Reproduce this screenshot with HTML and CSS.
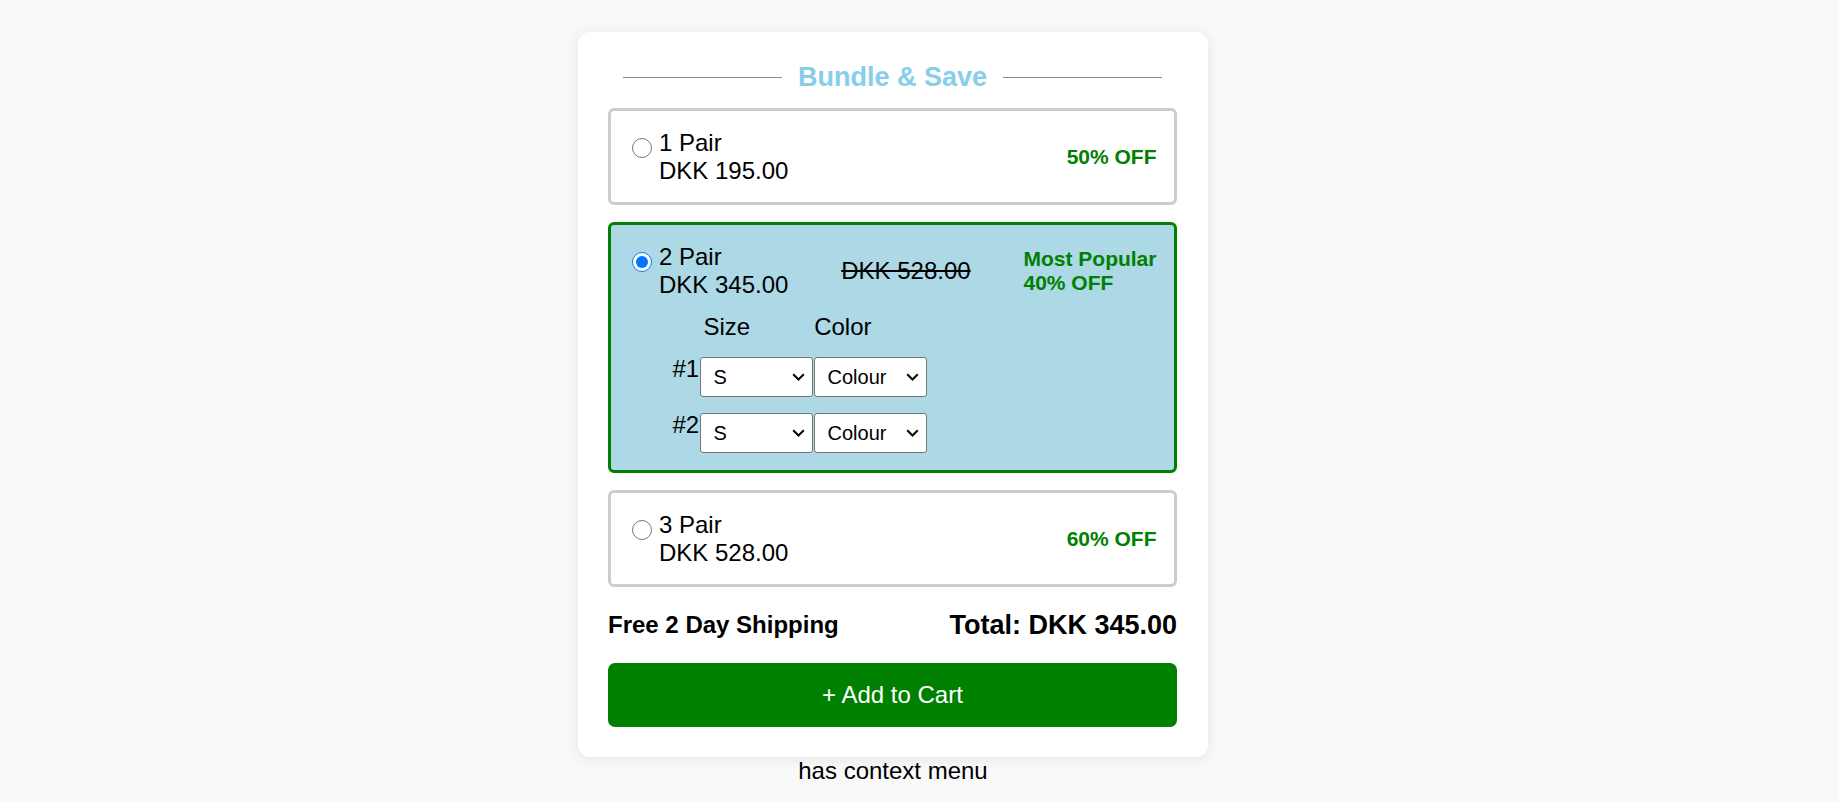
FILE: index.html
```html
<!DOCTYPE html>
<html lang="en">
<head>
<meta charset="utf-8">
<title>Bundle &amp; Save</title>
<link rel="stylesheet" href="styles.css">
</head>
<body>
<div class="page">
  <div class="card">
    <div class="title">
      <span class="title-line"></span>
      <span class="title-text">Bundle &amp; Save</span>
      <span class="title-line"></span>
    </div>

    <div class="option">
      <div class="option-head">
        <label class="choice">
          <input class="radio" type="radio" name="bundle">
          <span class="choice-text"><span>1 Pair</span><span>DKK 195.00</span></span>
        </label>
        <div class="badge">50% OFF</div>
      </div>
    </div>

    <div class="option option-selected">
      <div class="option-head">
        <label class="choice">
          <input class="radio" type="radio" name="bundle" checked>
          <span class="choice-text"><span>2 Pair</span><span>DKK 345.00</span></span>
        </label>
        <div class="old-price">DKK 528.00</div>
        <div class="badge"><span>Most Popular</span><span>40% OFF</span></div>
      </div>
      <div class="variants">
        <div class="variant-head">
          <span class="head-size">Size</span>
          <span class="head-color">Color</span>
        </div>
        <div class="variant-row">
          <span class="variant-num">#1</span>
          <select class="select"><option>S</option><option>M</option><option>L</option></select>
          <select class="select"><option>Colour</option></select>
        </div>
        <div class="variant-row">
          <span class="variant-num">#2</span>
          <select class="select"><option>S</option><option>M</option><option>L</option></select>
          <select class="select"><option>Colour</option></select>
        </div>
      </div>
    </div>

    <div class="option">
      <div class="option-head">
        <label class="choice">
          <input class="radio" type="radio" name="bundle">
          <span class="choice-text"><span>3 Pair</span><span>DKK 528.00</span></span>
        </label>
        <div class="badge">60% OFF</div>
      </div>
    </div>

    <div class="summary">
      <span class="shipping">Free 2 Day Shipping</span>
      <span class="total">Total: DKK 345.00</span>
    </div>

    <button class="cart-btn" type="button">+ Add to Cart</button>
  </div>
  <div class="note">has context menu</div>
</div>
</body>
</html>
```

FILE: styles.css
```css
* {
  box-sizing: border-box;
}

html, body {
  margin: 0;
  padding: 0;
  background: #f9f9f9;
}

body {
  font-family: "Liberation Sans", Arial, sans-serif;
  font-size: 24px;
  line-height: 28px;
  color: #000;
}

.page {
  width: 1786px;
  padding-top: 32px;
  display: flex;
  flex-direction: column;
  align-items: center;
}

.card {
  width: 630px;
  background: #fff;
  border-radius: 12px;
  padding: 30px 31px 30px 30px;
  box-shadow: 0 2px 14px rgba(0, 0, 0, 0.09);
  display: flex;
  flex-direction: column;
}

.title {
  display: flex;
  align-items: center;
  padding: 0 15px;
  margin-bottom: 15px;
}

.title-line {
  flex: 1;
  height: 1px;
  background: #8c8c8c;
}

.title-text {
  margin: 0 16px;
  font-size: 27px;
  line-height: 31px;
  font-weight: bold;
  color: #87ceeb;
}

.option {
  border: 3px solid #cccccc;
  border-radius: 6px;
  padding: 17.5px;
  margin-bottom: 17px;
  background: #fff;
}

.option-selected {
  border-color: #008000;
  background: #add8e6;
}

.option-head {
  display: flex;
  align-items: center;
  justify-content: space-between;
}

.choice {
  display: flex;
  align-items: flex-start;
}

.radio {
  width: 20px;
  height: 20px;
  margin: 9px 7px 0 3.5px;
  flex: none;
}

.choice-text {
  display: flex;
  flex-direction: column;
}

.old-price {
  text-decoration: line-through;
}

.badge {
  display: flex;
  flex-direction: column;
  font-size: 21px;
  line-height: 24px;
  font-weight: bold;
  color: #008000;
}

.variants {
  margin-left: 44px;
  margin-top: 14.5px;
}

.variant-head {
  display: flex;
  margin-bottom: 15.7px;
}

.head-size {
  margin-left: 31px;
}

.head-color {
  margin-left: 64px;
}

.variant-row {
  display: flex;
  align-items: flex-start;
  gap: 1px;
  margin-bottom: 16px;
}

.variant-row:last-child {
  margin-bottom: 0;
}

.variant-num {
  width: 26px;
  margin-top: -1.5px;
}

.select {
  appearance: none;
  -webkit-appearance: none;
  width: 113px;
  height: 40px;
  border: 1px solid #767676;
  border-radius: 3px;
  padding: 0 24px 0 13px;
  font-family: "Liberation Sans", Arial, sans-serif;
  font-size: 20px;
  color: #000;
  background-color: #fff;
  background-image: url("data:image/svg+xml,%3Csvg xmlns='http://www.w3.org/2000/svg' width='13' height='8' viewBox='0 0 13 8'%3E%3Cpath d='M1.2 1.2l5.3 5.3 5.3-5.3' fill='none' stroke='%23000' stroke-width='2'/%3E%3C/svg%3E");
  background-repeat: no-repeat;
  background-position: right 7px center;
}

.summary {
  display: flex;
  align-items: center;
  justify-content: space-between;
  margin-top: 5.5px;
}

.shipping {
  font-weight: bold;
}

.total {
  font-size: 27px;
  line-height: 31px;
  font-weight: bold;
}

.cart-btn {
  margin-top: 22px;
  height: 64px;
  width: 100%;
  border: none;
  border-radius: 7px;
  background: #008000;
  color: #fff;
  font-family: "Liberation Sans", Arial, sans-serif;
  font-size: 24px;
  cursor: pointer;
}

.note {
  text-align: center;
}
```
